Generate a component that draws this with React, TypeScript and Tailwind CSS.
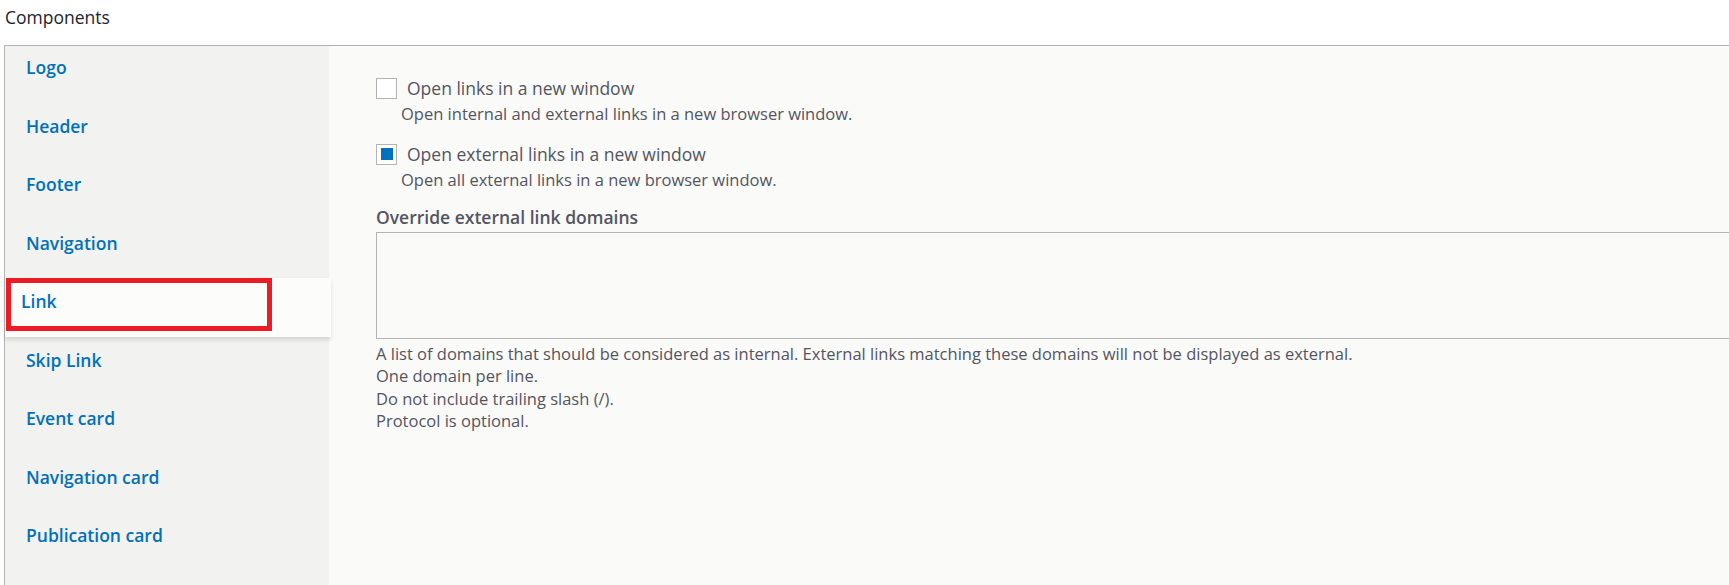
import * as React from "react";

const navItems = [
  "Logo",
  "Header",
  "Footer",
  "Navigation",
  "Link",
  "Skip Link",
  "Event card",
  "Navigation card",
  "Publication card",
];

function Checkbox({ checked }: { checked?: boolean }) {
  return (
    <span className="flex h-[21px] w-[21px] shrink-0 items-center justify-center border border-[#b4b4b4] bg-white">
      {checked && <span className="block h-[12px] w-[12px] bg-[#0071bc]" />}
    </span>
  );
}

export default function App() {
  const active = "Link";
  return (
    <div className="h-[585px] w-[1729px] overflow-hidden bg-white font-['Open_Sans',sans-serif] text-[#545560]">
      {/* title */}
      <div className="h-[45px] pl-[5px] pt-[5px] text-[17.5px] leading-[24px] text-[#222330]">
        Components
      </div>

      <div className="ml-[4px] flex h-[540px] border-l border-t border-[#b3b3b3]">
        {/* vertical tabs */}
        <div className="w-[324px] shrink-0 bg-[#f2f2f1]">
          {navItems.map((item) =>
            item === active ? (
              <div
                key={item}
                className="relative z-10 -mt-[2px] mb-[2px] h-[58.5px] w-[326px] bg-[#fcfcfa] pl-[16px] pt-[12px] text-[17.5px] font-semibold leading-[22px] text-[#0071b8] shadow-[0_3px_4px_rgba(0,0,0,0.12)]"
              >
                {item}
                <div className="absolute left-[1px] top-0 h-[53px] w-[266px] border-[5px] border-[#ed1c24]" />
              </div>
            ) : (
              <div
                key={item}
                className="h-[58.5px] pl-[21px] pt-[10px] text-[17.5px] font-semibold leading-[22px] text-[#0071b8]"
              >
                {item}
              </div>
            )
          )}
        </div>

        {/* content */}
        <div className="flex-1 bg-[#fafaf9] pl-[47px] pt-[31px]">
          <label className="flex items-center gap-[10px] text-[17.5px] leading-[22px]">
            <Checkbox />
            Open links in a new window
          </label>
          <div className="mt-[4px] pl-[25px] text-[16.5px] leading-[22px]">
            Open internal and external links in a new browser window.
          </div>

          <label className="mt-[18px] flex items-center gap-[10px] text-[17.5px] leading-[22px]">
            <Checkbox checked />
            Open external links in a new window
          </label>
          <div className="mt-[4px] pl-[25px] text-[16.5px] leading-[22px]">
            Open all external links in a new browser window.
          </div>

          <div className="mt-[15px] text-[17.5px] font-semibold leading-[22px]">
            Override external link domains
          </div>
          <textarea className="mt-[4px] block h-[107px] w-[1400px] resize-none border border-[#b3b3b3] bg-[#fafaf9] outline-none" />
          <div className="mt-[4px] text-[16.5px] leading-[22.4px]">
            <div>
              A list of domains that should be considered as internal. External links matching these domains will not be displayed as external.
            </div>
            <div>One domain per line.</div>
            <div>Do not include trailing slash (/).</div>
            <div>Protocol is optional.</div>
          </div>
        </div>
      </div>
    </div>
  );
}
